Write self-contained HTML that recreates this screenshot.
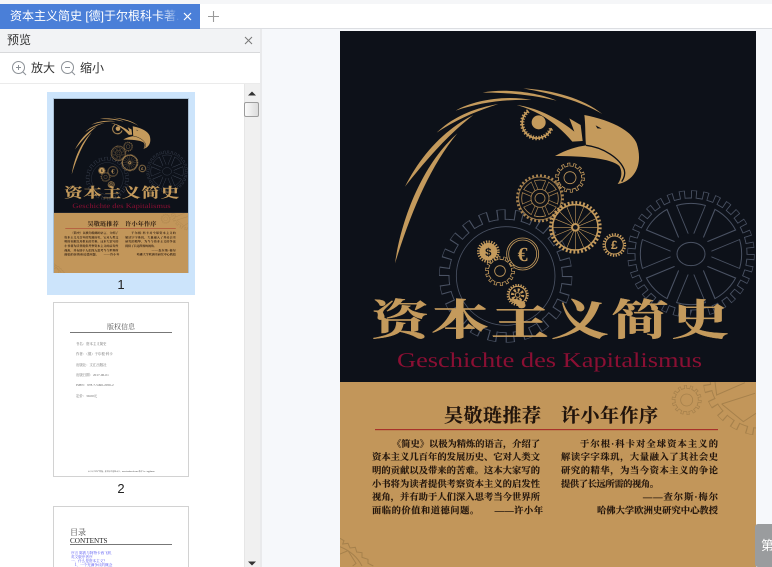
<!DOCTYPE html>
<html style="overflow:hidden"><head><meta charset="utf-8"><style>
html,body{margin:0;padding:0;width:772px;height:567px;overflow:hidden}
body{position:relative;background:#f6f8fb;font-family:"Liberation Sans","Noto Sans CJK SC",sans-serif;color:#333}
#root{position:absolute;left:0;top:0;width:772px;height:567px;overflow:hidden}
.a{position:absolute}
svg{display:block;position:absolute;overflow:hidden;text-rendering:geometricPrecision}
.serif{font-family:"Liberation Serif","Noto Serif CJK SC",serif}
</style></head><body><div id="root">
<div class="a" style="left:0;top:0;width:772px;height:29px;background:#fff;border-bottom:1px solid #dcdee2;box-sizing:border-box"></div>
<div class="a" style="left:0;top:0;width:772px;height:4px;background:#f5f6f8"></div>
<div class="a" style="left:0;top:4px;width:200px;height:25px;background:#4a7fd8"></div>
<div class="a" style="left:10px;top:4px;width:171px;height:25px;line-height:25px;font-size:12px;color:#fff;white-space:nowrap;overflow:hidden">资本主义简史 [德]于尔根科卡著.</div>
<div class="a" style="left:160px;top:4px;width:21px;height:25px;background:linear-gradient(90deg,rgba(74,127,216,0),#4a7fd8)"></div>
<svg style="left:183px;top:12px" width="9" height="9" viewBox="0 0 9 9"><path d="M1 1L8 8M8 1L1 8" stroke="#fff" stroke-width="1.2"/></svg>
<svg style="left:207px;top:10px" width="13" height="13" viewBox="0 0 13 13"><path d="M6.5 1V12M1 6.5H12" stroke="#9a9a9a" stroke-width="1.1"/></svg>

<div class="a" style="left:0;top:29px;width:260px;height:538px;background:#fff"></div>
<div class="a" style="left:260px;top:29px;width:2px;height:538px;background:#e9eaec"></div>
<div class="a" style="left:0;top:29px;width:260px;height:24px;background:#f2f3f5;border-bottom:1px solid #d8d9db;box-sizing:border-box"></div>
<div class="a" style="left:7px;top:29px;line-height:23px;font-size:12px;color:#333">预览</div>
<svg style="left:244px;top:36px" width="9" height="9" viewBox="0 0 9 9"><path d="M1 1L8 8M8 1L1 8" stroke="#777" stroke-width="1"/></svg>
<div class="a" style="left:0;top:83px;width:260px;height:1px;background:#ebebeb"></div>
<svg style="left:11px;top:60px" width="16" height="16" viewBox="0 0 16 16" fill="none" stroke="#8b9096"><circle cx="7.5" cy="7.5" r="6"/><path d="M12 12L15 15M5 7.5H10M7.5 5V10"/></svg>
<svg style="left:60px;top:60px" width="16" height="16" viewBox="0 0 16 16" fill="none" stroke="#8b9096"><circle cx="7.5" cy="7.5" r="6"/><path d="M12 12L15 15M5 7.5H10"/></svg>
<div class="a" style="left:31px;top:60px;line-height:17px;font-size:12px;color:#333">放大</div>
<div class="a" style="left:80px;top:60px;line-height:17px;font-size:12px;color:#333">缩小</div>

<div class="a" style="left:244px;top:84px;width:16px;height:483px;background:#f0f0f0;border-left:1px solid #e6e6e6;box-sizing:border-box"></div>
<svg style="left:248px;top:91px" width="8" height="5" viewBox="0 0 8 5"><path d="M4 0.5L8 4.5H0Z" fill="#333"/></svg>
<svg style="left:248px;top:561px" width="8" height="5" viewBox="0 0 8 5"><path d="M0 0.5H8L4 4.5Z" fill="#333"/></svg>
<div class="a" style="left:244px;top:102px;width:15px;height:15px;box-sizing:border-box;border:1px solid #9d9d9d;border-radius:2px;background:linear-gradient(90deg,#fafafa,#dcdcdc)"></div>

<div class="a" style="left:47px;top:92px;width:148px;height:203px;background:#cce4fb"></div>
<div class="a" style="left:53px;top:98px;width:136px;height:175px;box-sizing:border-box;border:1px solid #a9bfd3"></div>
<div class="a" style="left:47px;top:277px;width:148px;text-align:center;font-size:13px;line-height:16px;color:#222">1</div>
<div class="a" style="left:53px;top:302px;width:136px;height:175px;box-sizing:border-box;border:1px solid #d2d2d2;background:#fff"></div>
<div class="a" style="left:47px;top:481px;width:148px;text-align:center;font-size:13px;line-height:16px;color:#222">2</div>
<div class="a" style="left:53px;top:506px;width:136px;height:61px;box-sizing:border-box;border:1px solid #d2d2d2;border-bottom:0;background:#fff"></div>

<div class="a serif" style="left:54px;top:323px;width:134px;text-align:center;font-size:7px;line-height:9px;color:#555">版权信息</div>
<div class="a" style="left:70px;top:332px;width:102px;height:1px;background:#777"></div>
<div class="a serif" style="left:76px;top:339px;font-size:3.4px;line-height:10.35px;color:#666;white-space:pre">书名：资本主义简史
作者：（德）于尔根·科卡
出版社：文汇出版社
出版日期：2017-06-01
ISBN：978-7-5496-2056-2
定价：39.00元</div>
<div class="a serif" style="left:88px;top:470px;font-size:1.9px;line-height:4px;color:#333;white-space:nowrap">本书由“行行”整理，如果你不喜欢本书，www.ireadweek.com 请加 Vx：txgjshuwu</div>
<div class="a serif" style="left:70px;top:527px;font-size:8px;line-height:11px;color:#444">目录</div>
<div class="a serif" style="left:70px;top:536px;font-size:7.2px;line-height:10px;color:#222">CONTENTS</div>
<div class="a" style="left:70px;top:544px;width:102px;height:1px;background:#777"></div>
<div class="a serif" style="left:71px;top:551px;width:100px;height:16px;overflow:hidden;font-size:3.6px;line-height:4px;color:#4a4af0;white-space:pre">序言 陈波与阿特卡西飞机
英文版序者序
一、什么是资本主义？
    1、一个充满争议的概念</div>

<svg style="left:54px;top:99px" width="134" height="174" viewBox="340 31 416 536" preserveAspectRatio="none">
<use href="#art"/>
<g class="serif" font-weight="700">
<text transform="translate(371,335) scale(1,.74)" font-size="58" textLength="358" fill="#c49a5c" stroke="#c49a5c" stroke-width=".5">资本主义简史</text>
<text x="397" y="367" font-size="21" font-weight="400" textLength="305" lengthAdjust="spacingAndGlyphs" fill="#8a0f33">Geschichte des Kapitalismus</text>
<text x="444" y="422" font-size="19" fill="#2a1a10" textLength="214">吴敬琏推荐　许小年作序</text>
<rect x="375" y="429" width="343" height="1.5" fill="#a8322a"/>
<g font-size="9.3" fill="#2a1a10">
<text x="392" y="447" textLength="148">《简史》以极为精炼的语言，介绍了</text>
<text x="372" y="460" textLength="168">资本主义几百年的发展历史、它对人类文</text>
<text x="372" y="473.5" textLength="168">明的贡献以及带来的苦难。这本大家写的</text>
<text x="372" y="487" textLength="168">小书将为读者提供考察资本主义的启发性</text>
<text x="372" y="500" textLength="168">视角，并有助于人们深入思考当今世界所</text>
<text x="372" y="513.5" textLength="171">面临的价值和道德问题。　　——许小年</text>
<text x="580" y="447" textLength="138">于尔根·科卡对全球资本主义的</text>
<text x="561" y="460" textLength="157">解读字字珠玑，大量融入了其社会史</text>
<text x="561" y="473.5" textLength="157">研究的精华，为当今资本主义的争论</text>
<text x="561" y="487" textLength="98">提供了长远所需的视角。</text>
<text x="643" y="500" textLength="75">——查尔斯·梅尔</text>
<text x="597" y="513.5" textLength="121">哈佛大学欧洲史研究中心教授</text>
</g></g>
</svg>

<svg style="left:340px;top:31px" width="416" height="536" viewBox="340 31 416 536">
<defs>
<clipPath id="tan"><rect x="340" y="382" width="416" height="185"/></clipPath>
<g id="art">
<rect x="340" y="31" width="416" height="351" fill="#0d1119"/>
<rect x="340" y="382" width="416" height="185" fill="#c2965a"/>
<g transform="translate(340,30) scale(.33333)">
<path d="M165,700C185,560 250,400 352,310C270,410 215,540 165,700Z M195,470C240,380 310,300 400,255C330,310 270,375 195,470Z M290,308C340,260 400,235 475,222C410,243 350,268 290,308Z M347,242C400,210 500,195 575,210C500,207 420,217 347,242Z M428,188C490,175 590,185 650,212C580,195 500,187 428,188Z M550,175C640,180 730,205 787,252C720,212 640,192 550,175Z M530,225C590,232 660,268 703,305L688,265L722,285L728,333L697,335C650,280 600,245 530,225Z" fill="#c49a5c"/>
<path d="M733,255C800,268 870,295 890,340C905,385 895,425 870,445C858,455 845,460 833,462C845,445 848,425 838,408C815,385 730,378 645,378C680,358 710,350 738,346C735,315 737,285 733,255Z" fill="#c49a5c"/>
<path d="M738,346C790,352 840,385 853,420C856,432 852,445 845,455" fill="none" stroke="#0d1119" stroke-width="4"/>
<path d="M767,286L785,296L772,295Z" fill="#0d1119"/>
<path d="M565,243A45,45 0 1 0 634,294" fill="none" stroke="#c49a5c" stroke-width="5"/>
<path d="M565,243A45,45 0 1 0 634,294" fill="none" stroke="#c49a5c" stroke-width="13" stroke-dasharray="4 5"/>
<circle cx="596" cy="277" r="21" fill="#c49a5c"/>

<g fill="none" stroke="#4a5263" transform="translate(1053,672)">
<circle r="179" stroke-width="24" pathLength="64" stroke-dasharray="1 1"/>
<circle r="168" stroke-width="3"/>
<circle r="166.5" fill="#0d1119" stroke="none"/>
<circle r="177" stroke="#0d1119" stroke-width="24" pathLength="64" stroke-dasharray=".7 1.3" stroke-dashoffset="-.15"/>
<circle r="152" stroke-width="3"/>
<path d="M-58,-140L58,140M58,-140L-58,140M-140,-58L140,58M140,-58L-140,58" stroke-width="34"/>
<path d="M-60,-146L60,146M60,-146L-60,146M-146,-60L146,60M146,-60L-146,60" stroke="#0d1119" stroke-width="28"/>
<circle r="62" fill="#0d1119" stroke="none"/>
<ellipse rx="42" ry="35" stroke-width="3"/>
</g>
<g fill="none" stroke="#4a5263" transform="translate(497,738)">
<circle r="184" stroke-width="32" pathLength="44" stroke-dasharray="1 1"/>
<circle r="170" stroke-width="3"/>
<circle r="168.5" fill="#0d1119" stroke="none"/>
<circle r="182" stroke="#0d1119" stroke-width="32" pathLength="44" stroke-dasharray=".75 1.25" stroke-dashoffset="-.125"/>
<circle r="148" stroke-width="2.5"/>
</g>

<g fill="none" stroke="#c49a5c">
<g transform="translate(690,443)">
<circle r="38" stroke-width="14" pathLength="28" stroke-dasharray="1 1"/>
<circle r="35" fill="#0d1119" stroke-width="2.5"/>
<circle r="37" stroke="#0d1119" stroke-width="12" pathLength="28" stroke-dasharray=".5 1.5" stroke-dashoffset="-.25"/>
<circle r="18" stroke-width="2.5"/>
</g>
<g transform="translate(600,505)" stroke="#a8834f">
<circle r="68" stroke-width="8" pathLength="72" stroke-dasharray="1 1"/>
<circle r="64" stroke-width="2.5" fill="#0d1119"/>
<circle r="55" stroke-width="2.5"/>
<path d="M-22,-52L22,52M22,-52L-22,52M-52,-22L52,22M52,-22L-52,22" stroke-width="12"/>
<path d="M-23,-54L23,54M23,-54L-23,54M-54,-23L54,23M54,-23L-54,23" stroke="#0d1119" stroke-width="8"/>
<circle r="27" fill="#0d1119" stroke-width="2.5"/>
<circle r="15" stroke-width="2.5"/>
</g>
<g transform="translate(706,592)">
<circle r="74" stroke-width="10" pathLength="80" stroke-dasharray="1 1"/>
<circle r="68" stroke-width="4.5"/>
<path d="M0,-68V68M-68,0H68M-48,-48L48,48M48,-48L-48,48M-26,-63L26,63M26,-63L-26,63M-63,-26L63,26M63,-26L-63,26" stroke-width="1.8"/>
<circle r="10" fill="#0d1119" stroke-width="6"/>
</g>
<g transform="translate(823,645)">
<circle r="32" stroke-width="7" pathLength="48" stroke-dasharray="1 1"/>
<circle r="27" stroke-width="3"/>
</g>
<g transform="translate(445,665)">
<circle r="30" stroke-width="8" pathLength="48" stroke-dasharray="1 1"/>
<circle r="25" fill="#c49a5c" stroke="#c49a5c" stroke-width="3"/>
</g>
<g transform="translate(548,672)">
<circle r="48" stroke-width="2.5"/>
<circle r="42" stroke-width="2.5"/>
</g>
<g transform="translate(480,723)">
<circle r="38" stroke-width="14" pathLength="28" stroke-dasharray="1 1"/>
<circle r="35" fill="#0d1119" stroke-width="2.5"/>
<circle r="37" stroke="#0d1119" stroke-width="12" pathLength="28" stroke-dasharray=".5 1.5" stroke-dashoffset="-.25"/>
<circle r="16" stroke-width="2.5"/>
</g>
<g transform="translate(533,795)">
<circle r="30" stroke-width="6" pathLength="48" stroke-dasharray="1 1"/>
<circle r="26" stroke-width="3.5"/>
<circle r="15" stroke-width="10" pathLength="16" stroke-dasharray="1 1"/>
<circle r="7" stroke-width="3"/>
</g>
</g>
<g font-family="Liberation Sans" font-weight="700" fill="#c49a5c" text-anchor="middle">
<text x="823" y="657" font-size="36">£</text>
<text x="548" y="693" font-size="60" font-family="Liberation Serif">€</text>
<text x="445" y="678" font-size="34" fill="#0d1119">$</text>
</g>
</g>
<g clip-path="url(#tan)"><g transform="translate(340,280) scale(.33333)" fill="none" stroke="#a6814c">
<g transform="translate(1040,360)">
<circle r="38" stroke-width="14" pathLength="28" stroke-dasharray="1 1"/>
<circle r="35" fill="#c2965a" stroke-width="2.5"/>
<circle r="37" stroke="#c2965a" stroke-width="12" pathLength="28" stroke-dasharray=".5 1.5" stroke-dashoffset="-.25"/>
<circle r="18" stroke-width="2.5"/>
</g>
<g transform="translate(1265,290)">
<circle r="165" stroke-width="24" pathLength="44" stroke-dasharray="1 1"/>
<circle r="155" stroke-width="3"/>
<circle r="153.5" fill="#c2965a" stroke="none"/>
<circle r="163" stroke="#c2965a" stroke-width="24" pathLength="44" stroke-dasharray=".7 1.3" stroke-dashoffset="-.15"/>
</g>
<path d="M1125,306L1130,345L1215,308M1145,372L1245,340M1145,372L1210,425L1248,400" stroke-width="3"/>
<path d="M0,775L12,782L8,792L24,790L30,804L46,802L50,816L66,818L66,832L84,838L84,850L100,858" stroke-width="3"/>
<path d="M0,800C30,812 52,830 66,858M0,822L24,812L48,850L38,858" stroke-width="3"/>
</g></g>
</g>
</defs>
<use href="#art"/>
<g class="serif" font-weight="700">
<text transform="translate(371,335) scale(1,.74)" font-size="58" textLength="358" fill="#c49a5c" stroke="#c49a5c" stroke-width=".5">资本主义简史</text>
<text x="397" y="367" font-size="21" font-weight="400" textLength="305" lengthAdjust="spacingAndGlyphs" fill="#8a0f33">Geschichte des Kapitalismus</text>
<text x="444" y="422" font-size="19" fill="#21140c" stroke="#21140c" stroke-width=".2" textLength="214">吴敬琏推荐　许小年作序</text>
<rect x="375" y="429" width="343" height="1.2" fill="#a8322a"/>
<g font-size="9.3" fill="#21140c" stroke="#21140c" stroke-width=".12">
<text x="392" y="447" textLength="148">《简史》以极为精炼的语言，介绍了</text>
<text x="372" y="460" textLength="168">资本主义几百年的发展历史、它对人类文</text>
<text x="372" y="473.5" textLength="168">明的贡献以及带来的苦难。这本大家写的</text>
<text x="372" y="487" textLength="168">小书将为读者提供考察资本主义的启发性</text>
<text x="372" y="500" textLength="168">视角，并有助于人们深入思考当今世界所</text>
<text x="372" y="513.5" textLength="171">面临的价值和道德问题。　　——许小年</text>
<text x="580" y="447" textLength="138">于尔根·科卡对全球资本主义的</text>
<text x="561" y="460" textLength="157">解读字字珠玑，大量融入了其社会史</text>
<text x="561" y="473.5" textLength="157">研究的精华，为当今资本主义的争论</text>
<text x="561" y="487" textLength="98">提供了长远所需的视角。</text>
<text x="643" y="500" textLength="75">——查尔斯·梅尔</text>
<text x="597" y="513.5" textLength="121">哈佛大学欧洲史研究中心教授</text>
</g></g>
</svg>

<div class="a" style="left:755px;top:524px;width:17px;height:43px;background:#9a9c9e;border-radius:3px 0 0 3px;color:#fff;font-size:13px;line-height:43px;padding-left:6px;box-sizing:border-box;white-space:nowrap;overflow:hidden">第</div>
</div></body></html>
